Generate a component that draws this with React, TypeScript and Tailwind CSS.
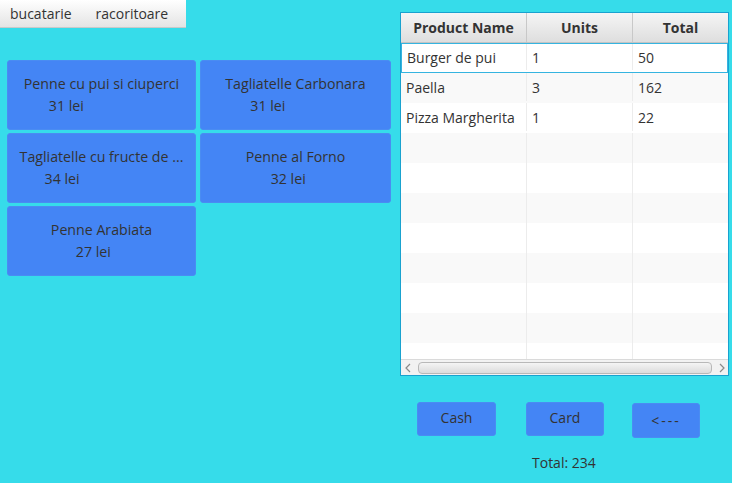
import React from 'react'

const font = { fontFamily: '"Open Sans", "Noto Sans", sans-serif' }

const products = [
  { name: 'Penne cu pui si ciuperci', price: 31 },
  { name: 'Tagliatelle Carbonara', price: 31 },
  { name: 'Tagliatelle cu fructe de ...', price: 34 },
  { name: 'Penne al Forno', price: 32 },
  { name: 'Penne Arabiata', price: 27 },
]

const rows = [
  { name: 'Burger de pui', units: '1', total: '50' },
  { name: 'Paella', units: '3', total: '162' },
  { name: 'Pizza Margherita', units: '1', total: '22' },
]

function ProductButton({ name, price }: { name: string; price: number }) {
  return (
    <button className="h-[70px] rounded-[3px] bg-[#4485f5] border border-[#4a8cf2] flex items-center justify-center text-[#333] text-[14.2px]">
      <div className="flex flex-col items-start leading-[22px] pb-[1px]">
        <span>{name}</span>
        <span className="pl-[25px]">{price} lei</span>
      </div>
    </button>
  )
}

export default function App() {
  const filler = Array.from({ length: 8 })
  return (
    <div className="w-[732px] h-[483px] bg-[#36dcea] flex overflow-hidden" style={font}>
      {/* left side: categories + products */}
      <div className="w-[400px] flex flex-col">
        <div className="w-[186px] h-[28px] flex items-center gap-[24px] pl-[10px] pb-[1px] text-[14px] text-[#333] bg-gradient-to-b from-white to-[#e4e4e4] border-b border-[#c9c9c9]">
          <span>bucatarie</span>
          <span>racoritoare</span>
        </div>
        <div className="grid grid-cols-[189px_191px] gap-x-[4px] gap-y-[3px] pl-[7px] mt-[32px]">
          {products.map((p) => (
            <ProductButton key={p.name} {...p} />
          ))}
        </div>
      </div>

      {/* right side: order table */}
      <div className="flex flex-col pt-[12px]">
        <div className="w-[329px] h-[364px] border border-[#19a2cf] bg-white flex flex-col text-[14px] text-[#333]">
          <div className="flex h-[30px] bg-gradient-to-b from-[#f5f5f5] to-[#dedede] border-b border-[#c4c4c4] font-bold shrink-0">
            <div className="w-[126px] flex items-center justify-center border-r border-[#c8c8c8]">Product Name</div>
            <div className="w-[106px] flex items-center justify-center border-r border-[#c8c8c8]">Units</div>
            <div className="flex-1 flex items-center justify-center">Total</div>
          </div>
          <div className="flex-1 overflow-hidden">
            {rows.map((r, i) => (
              <div
                key={r.name}
                className={`flex h-[30px] pb-[2px] ${i === 0 ? 'border border-[#35b4e0]' : ''} ${i % 2 === 1 ? 'bg-[#f9f9f9]' : 'bg-white'}`}
              >
                <div className={`${i === 0 ? 'w-[125px]' : 'w-[126px]'} flex items-center pl-[5px] border-r border-[#ececec]`}>{r.name}</div>
                <div className="w-[106px] flex items-center pl-[5px] border-r border-[#ececec]">{r.units}</div>
                <div className="flex-1 flex items-center pl-[5px]">{r.total}</div>
              </div>
            ))}
            {filler.map((_, i) => (
              <div key={i} className={`flex h-[30px] ${(i + 3) % 2 === 1 ? 'bg-[#f9f9f9]' : 'bg-white'}`}>
                <div className="w-[126px] border-r border-[#ececec]" />
                <div className="w-[106px] border-r border-[#ececec]" />
                <div className="flex-1" />
              </div>
            ))}
          </div>
          <div className="h-[16px] shrink-0 flex items-center gap-[2px] bg-[#f2f2f2] border-t border-[#dadada]">
            <svg width="14" height="14" viewBox="0 0 14 14" className="shrink-0 ml-[1px]">
              <path d="M8 3 L4 7 L8 11" fill="none" stroke="#8a8a8a" strokeWidth="1.2" />
            </svg>
            <div className="flex-1 h-[12px] rounded-[4px] border border-[#b8b8b8] bg-gradient-to-b from-[#f4f4f4] to-[#dcdcdc]" />
            <svg width="14" height="14" viewBox="0 0 14 14" className="shrink-0">
              <path d="M6 3 L10 7 L6 11" fill="none" stroke="#8a8a8a" strokeWidth="1.2" />
            </svg>
          </div>
        </div>

        <div className="flex items-start mt-[26px] text-[#333] text-[14px]">
          <button className="ml-[17px] w-[79px] h-[34px] pb-[3px] rounded-[3px] bg-[#4485f5] border border-[#4a8cf2]">Cash</button>
          <button className="ml-[30px] w-[78px] h-[34px] pb-[3px] rounded-[3px] bg-[#4485f5] border border-[#4a8cf2]">Card</button>
          <button className="ml-[28px] mt-[1px] w-[68px] h-[35px] rounded-[3px] bg-[#4485f5] border border-[#4a8cf2] tracking-[2px]">{'<---'}</button>
        </div>
        <div className="mt-[14px] pl-[132px] text-[14px] text-[#333]">Total: 234</div>
      </div>
    </div>
  )
}
